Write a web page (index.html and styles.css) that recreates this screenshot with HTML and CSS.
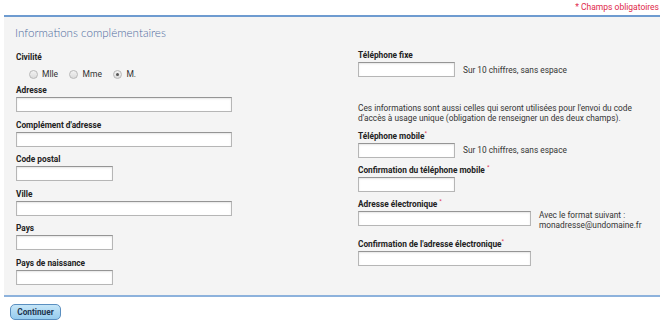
FILE: index.html
```html
<!DOCTYPE html>
<html lang="fr">
<head>
    <meta charset="UTF-8">
    <title>Informations complémentaires</title>
    <link rel="stylesheet" href="styles.css">
</head>
<body>
    <!-- Mandatory note -->
    <div class="top-note"><span class="req">*</span> Champs obligatoires</div>

    <!-- Form panel -->
    <div class="panel">
        <div class="panel-title">Informations complémentaires</div>

        <div class="columns">
            <!-- Left column -->
            <div class="col col-left">
                <div class="field">
                    <div class="label">Civilité</div>
                    <div class="radio-row">
                        <span class="radio-item"><span class="radio"></span>Mlle</span>
                        <span class="radio-item"><span class="radio"></span>Mme</span>
                        <span class="radio-item"><span class="radio checked"></span>M.</span>
                    </div>
                </div>
                <div class="field">
                    <div class="label">Adresse</div>
                    <input class="input input-long" type="text">
                </div>
                <div class="field">
                    <div class="label">Complément d'adresse</div>
                    <input class="input input-long" type="text">
                </div>
                <div class="field">
                    <div class="label">Code postal</div>
                    <input class="input input-short" type="text">
                </div>
                <div class="field">
                    <div class="label">Ville</div>
                    <input class="input input-long" type="text">
                </div>
                <div class="field">
                    <div class="label">Pays</div>
                    <input class="input input-short" type="text">
                </div>
                <div class="field">
                    <div class="label">Pays de naissance</div>
                    <input class="input input-short" type="text">
                </div>
            </div>

            <!-- Right column -->
            <div class="col col-right">
                <div class="field">
                    <div class="label">Téléphone fixe</div>
                    <div class="input-row">
                        <input class="input input-short" type="text">
                        <span class="hint">Sur 10 chiffres, sans espace</span>
                    </div>
                </div>

                <p class="info">Ces informations sont aussi celles qui seront utilisées pour l'envoi du code d'accès à usage unique (obligation de renseigner un des deux champs).</p>

                <div class="field">
                    <div class="label">Téléphone mobile<sup class="req">*</sup></div>
                    <div class="input-row">
                        <input class="input input-short" type="text">
                        <span class="hint">Sur 10 chiffres, sans espace</span>
                    </div>
                </div>
                <div class="field">
                    <div class="label">Confirmation du téléphone mobile <sup class="req">*</sup></div>
                    <input class="input input-short" type="text">
                </div>
                <div class="field field-wide">
                    <div class="label">Adresse électronique <sup class="req">*</sup></div>
                    <div class="input-row top">
                        <input class="input input-mail" type="text">
                        <span class="hint two-lines">Avec le format suivant :<br>monadresse@undomaine.fr</span>
                    </div>
                </div>
                <div class="field">
                    <div class="label">Confirmation de l'adresse électronique<sup class="req">*</sup></div>
                    <input class="input input-mail" type="text">
                </div>
            </div>
        </div>
    </div>

    <div class="actions">
        <button class="btn">Continuer</button>
    </div>
</body>
</html>
```

FILE: styles.css
```css
* {
    margin: 0;
    padding: 0;
    box-sizing: border-box;
    font-family: Roboto, 'Liberation Sans', sans-serif;
}

:root {
    --panel-bg: #f4f4f4;
    --border-blue: #6e9bd0;
    --title-blue: #4f6ca0;
    --text-dark: #222222;
    --red: #e0284a;
}

body {
    background-color: #ffffff;
    color: var(--text-dark);
    font-size: 8.3px;
}

.req {
    color: var(--red);
}

/* Top note */
.top-note {
    height: 15px;
    line-height: 15px;
    text-align: right;
    padding-right: 9px;
    font-size: 8.5px;
    color: var(--red);
}

/* Panel */
.panel {
    margin: 0 8px 0 4px;
    background-color: var(--panel-bg);
    border-top: 2px solid var(--border-blue);
    border-bottom: 2px solid #8db2dc;
    padding: 8px 12px 10.5px;
}

.panel-title {
    font-family: Lato, 'Open Sans', sans-serif;
    font-weight: 300;
    font-size: 11.6px;
    line-height: 16px;
    color: var(--title-blue);
    margin-left: -1px;
}

.columns {
    display: grid;
    grid-template-columns: 342px 1fr;
    margin-top: 8px;
}

.col {
    display: flex;
    flex-direction: column;
}

.col-left {
    padding-top: 1.5px;
}

.col-left .field {
    margin-bottom: 6.5px;
}

.col-left .field:last-child {
    margin-bottom: 0;
}

.col-right .field {
    margin-bottom: 6px;
}

.col-right .field-wide {
    margin-bottom: 7px;
}

.label {
    font-weight: 700;
    font-size: 8.3px;
    line-height: 13px;
    height: 13px;
    color: var(--text-dark);
}

.label sup {
    font-size: 6px;
    font-weight: 400;
    vertical-align: 4px;
    line-height: 0;
}

/* Radios */
.radio-row {
    height: 14px;
    display: flex;
    align-items: center;
    padding-left: 12.5px;
    margin: 3.5px 0 -3.5px;
}

.radio-item {
    display: flex;
    align-items: center;
    gap: 4.5px;
    margin-right: 11px;
    color: #333333;
    font-size: 8.5px;
}

.radio {
    width: 9px;
    height: 9px;
    border-radius: 50%;
    border: 1px solid #b8b8b8;
    background: linear-gradient(#f2f2f2, #dcdcdc);
    position: relative;
}

.radio.checked::after {
    content: "";
    position: absolute;
    left: 2px;
    top: 2px;
    width: 3px;
    height: 3px;
    border-radius: 50%;
    background-color: #555555;
}

/* Inputs */
.input {
    display: block;
    height: 15px;
    background-color: #ffffff;
    border: 1px solid #b6b6b6;
    border-top-color: #959595;
    box-shadow: inset 0 1px 2px rgba(0, 0, 0, 0.1);
    outline: none;
}

.input-long {
    width: 216px;
}

.input-short {
    width: 97px;
}

.input-mail {
    width: 173px;
}

.input-row {
    display: flex;
    align-items: center;
    gap: 8px;
}

.input-row.top {
    align-items: flex-start;
    height: 20px;
}

.hint {
    font-size: 8.3px;
    color: #333333;
    white-space: nowrap;
}

.hint.two-lines {
    line-height: 10px;
    margin-top: -1px;
}

.info {
    font-size: 8.3px;
    line-height: 10.4px;
    color: #333333;
    margin: 20px 0 6px;
    padding-right: 10px;
}

/* Bottom actions */
.actions {
    padding: 7px 10px;
}

.btn {
    width: 51px;
    height: 16px;
    border: 1px solid #5a8fc0;
    border-radius: 5px;
    background: linear-gradient(#c6e6f8, #95cbee);
    color: #1d3550;
    font-weight: 700;
    font-size: 8.3px;
    cursor: pointer;
}
```
